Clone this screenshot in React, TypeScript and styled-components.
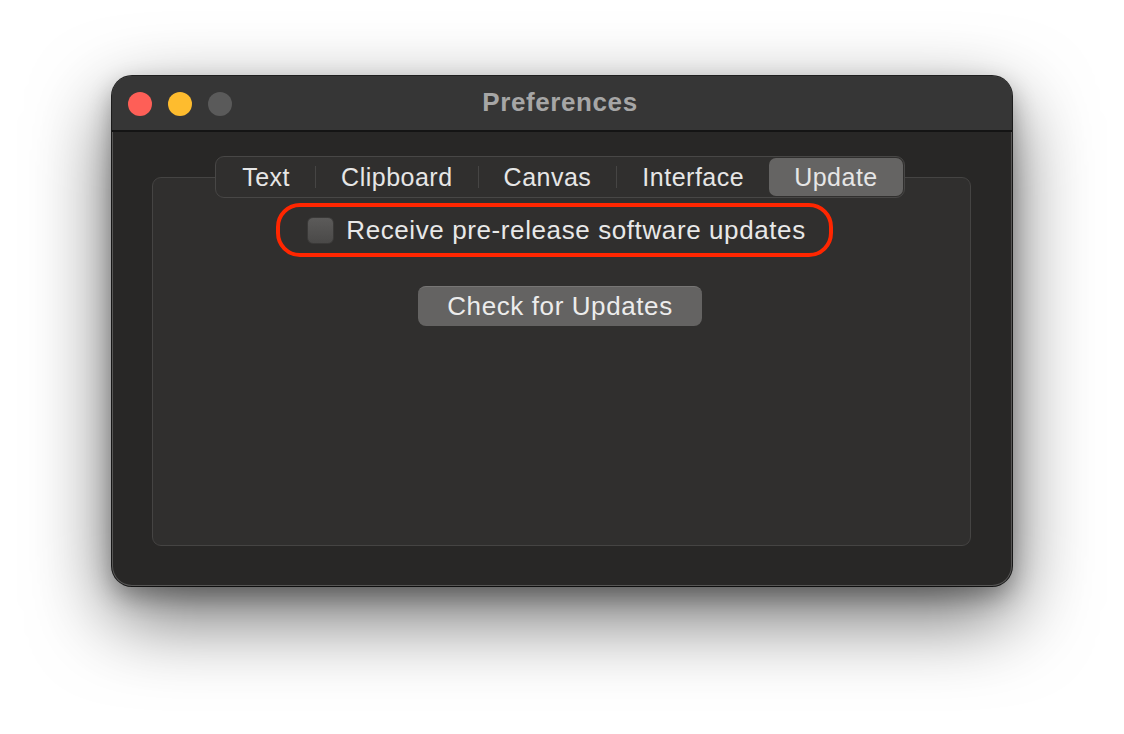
import styled, { createGlobalStyle } from "styled-components";

const tabs = ["Text", "Clipboard", "Canvas", "Interface", "Update"];
const selectedTab = "Update";

const GlobalStyle = createGlobalStyle`
  html, body {
    margin: 0;
    padding: 0;
    background: #ffffff;
    font-family: "Liberation Sans", Arial, sans-serif;
  }
`;

export default function App() {
  return (
    <>
      <GlobalStyle />
      <Stage>
        <Window>
          <TitleBar>
            <Lights>
              <Light color="#fe5f57" />
              <Light color="#febc2e" />
              <Light color="#5a5a5a" />
            </Lights>
            <Title>Preferences</Title>
          </TitleBar>
          <Body>
            <TabBar>
              {tabs.map((tab, i) => (
                <TabWrap key={tab}>
                  {i > 0 && tabs[i - 1] !== selectedTab && tab !== selectedTab && (
                    <Separator />
                  )}
                  <Tab $active={tab === selectedTab}>{tab}</Tab>
                </TabWrap>
              ))}
            </TabBar>
            <GroupBox>
              <Highlight>
                <Checkbox />
                <Label>Receive pre-release software updates</Label>
              </Highlight>
              <Button>Check for Updates</Button>
            </GroupBox>
          </Body>
        </Window>
      </Stage>
    </>
  );
}

const Stage = styled.div`
  width: 1124px;
  height: 734px;
  padding: 76px 0 0 112px;
  box-sizing: border-box;
  background: #ffffff;
  overflow: hidden;
`;

const Window = styled.div`
  width: 900px;
  height: 510px;
  box-sizing: border-box;
  border-radius: 20px;
  background: #282726;
  overflow: hidden;
  display: flex;
  flex-direction: column;
  box-shadow: 0 0 0 1px rgba(0, 0, 0, 0.85), inset 0 0 0 1px rgba(255, 255, 255, 0.22),
    0 30px 80px rgba(0, 0, 0, 0.6), 0 10px 24px rgba(0, 0, 0, 0.3);
`;

const TitleBar = styled.div`
  height: 56px;
  flex: none;
  background: #363636;
  border-bottom: 2px solid #141414;
  box-sizing: border-box;
  position: relative;
  display: flex;
  align-items: center;
  justify-content: center;
`;

const Lights = styled.div`
  position: absolute;
  left: 16px;
  top: 16px;
  display: flex;
  gap: 16px;
`;

const Light = styled.span<{ color: string }>`
  width: 24px;
  height: 24px;
  border-radius: 50%;
  background: ${(p) => p.color};
`;

const Title = styled.div`
  font-size: 26px;
  font-weight: 700;
  color: #a6a6a6;
  letter-spacing: 0.6px;
  margin: 0 4px 1px 0;
`;

const Body = styled.div`
  flex: 1;
  padding: 24px 41px 40px 40px;
  display: flex;
  flex-direction: column;
  align-items: center;
`;

const TabBar = styled.div`
  position: relative;
  z-index: 1;
  display: flex;
  height: 42px;
  box-sizing: border-box;
  padding: 1px;
  margin-right: 3px;
  border-radius: 9px;
  background: #302f2e;
  border: 1px solid #484746;
`;

const TabWrap = styled.div`
  display: flex;
  align-items: center;
`;

const Separator = styled.span`
  width: 1px;
  height: 22px;
  background: #464544;
`;

const Tab = styled.div<{ $active: boolean }>`
  height: 100%;
  display: flex;
  align-items: center;
  padding: 0 25px;
  border-radius: 7px;
  font-size: 25px;
  letter-spacing: 0.5px;
  color: #e6e6e6;
  background: ${(p) => (p.$active ? "#656463" : "transparent")};
`;

const GroupBox = styled.div`
  align-self: stretch;
  flex: 1;
  margin-top: -21px;
  border: 1px solid #454443;
  border-radius: 9px;
  background: #302f2e;
  display: flex;
  flex-direction: column;
  align-items: center;
  padding-top: 25px;
`;

const Highlight = styled.div`
  display: flex;
  align-items: center;
  gap: 12px;
  height: 54px;
  box-sizing: border-box;
  padding: 0 23px 0 27px;
  border: 4px solid #ff2600;
  border-radius: 24px;
  margin-left: -14px;
`;

const Checkbox = styled.span`
  width: 27px;
  height: 27px;
  box-sizing: border-box;
  border-radius: 6px;
  background: linear-gradient(#5c5b5a, #4a4948);
  border: 1px solid #3a3938;
`;

const Label = styled.span`
  font-size: 26px;
  letter-spacing: 0.6px;
  color: #e8e8e8;
`;

const Button = styled.div`
  margin: 29px 3px 0 0;
  width: 284px;
  height: 40px;
  box-sizing: border-box;
  border-radius: 8px;
  background: #646362;
  border-top: 1px solid #777675;
  display: flex;
  align-items: center;
  justify-content: center;
  font-size: 26px;
  letter-spacing: 0.6px;
  color: #ececec;
`;
